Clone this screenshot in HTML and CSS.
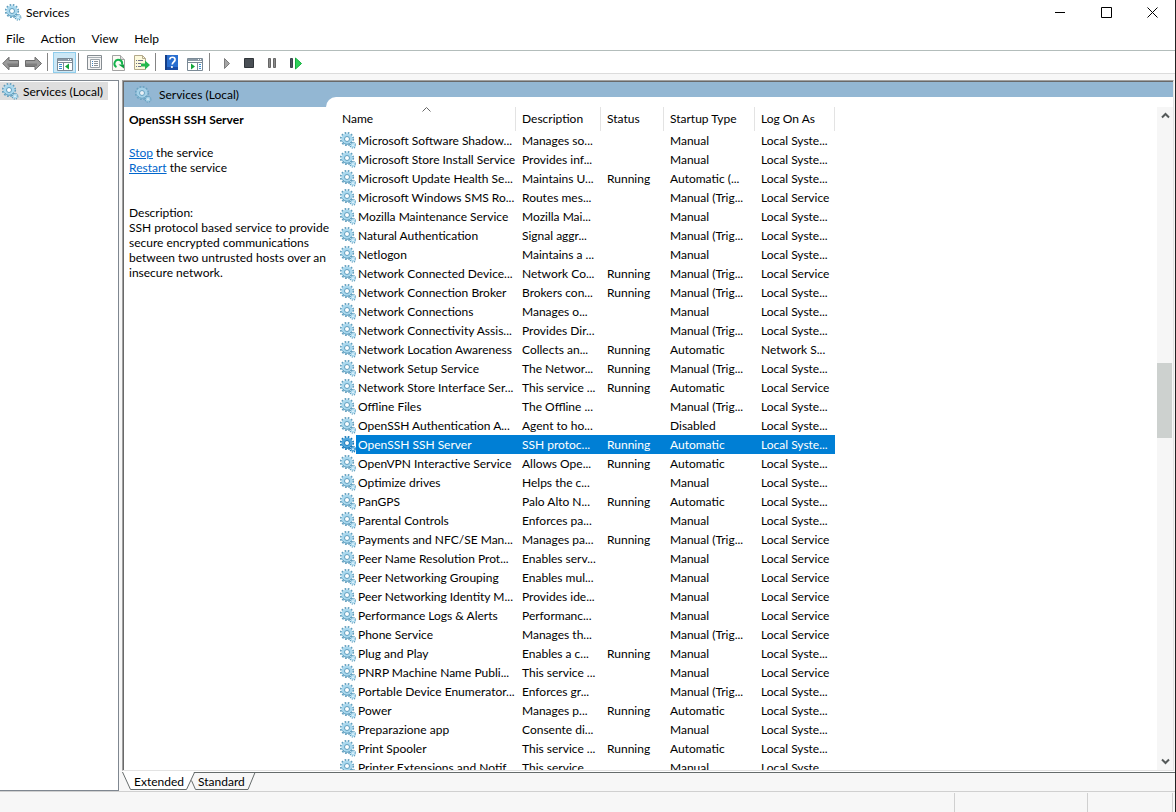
FILE: index.html
```
<!DOCTYPE html>
<html lang="en">
<head>
    <meta charset="UTF-8">
    <meta name="viewport" content="width=device-width, initial-scale=1.0">
    <title>Services</title>
    <link rel="stylesheet" href="styles.css">
</head>
<body>
    <!-- shared gear icon -->
    <svg class="defs" width="0" height="0" aria-hidden="true">
        <symbol id="gear" viewBox="0 0 17 17">
            <circle class="gear-teeth" cx="7" cy="7" r="6.2" fill="none" stroke-width="1.8" stroke-dasharray="1.7 1.55"/>
            <circle class="gear-ring" cx="7" cy="7" r="4" fill="#fff" stroke-width="3"/>
            <path class="gear-teeth" d="M2.500 9.500A5 5 0 0 0 11.500 9.500" fill="none" stroke-width="1"/>
            <circle class="gear-teeth" cx="7" cy="7" r="2.5" fill="none" stroke-width="1"/>
            <circle class="gear-teeth" cx="13" cy="13.2" r="2.8" fill="none" stroke-width="1.4" stroke-dasharray="1.2 1"/>
            <circle class="gear-ring" cx="13" cy="13.2" r="1.6" fill="#e8f5fb" stroke-width="1.4"/>
        </symbol>
    </svg>

    <div class="window">
        <header class="titlebar">
            <svg class="gear"><use href="#gear"/></svg>
            <span class="caption">Services</span>
            <button class="winbtn" aria-label="Minimize"><svg width="11" height="11"><path d="M0 5.5h10" stroke="#000"/></svg></button>
            <button class="winbtn" aria-label="Maximize"><svg width="11" height="11"><path d="M.5.5h10v10H.5z" fill="none" stroke="#000"/></svg></button>
            <button class="winbtn" aria-label="Close"><svg width="11" height="11"><path d="M.5.5l10 10M10.5.5l-10 10" stroke="#000"/></svg></button>
        </header>

        <nav class="menubar">
            <button>File</button>
            <button>Action</button>
            <button>View</button>
            <button>Help</button>
        </nav>

        <div class="toolbar">
            <button aria-label="Back"><svg viewBox="0 0 17 17"><path d="M.7 9.500L7 3.200v3.300h9.500v6H7v3.300z" fill="#9b9b9b" stroke="#6c6c6c"/><path d="M5 9.500h11v2.500H6z" fill="#7d7d7d"/></svg></button>
            <button aria-label="Forward"><svg viewBox="0 0 17 17"><path d="M16.500 9.500L10 3.200v3.300H.5v6H10v3.300z" fill="#9b9b9b" stroke="#6c6c6c"/><path d="M1 9.500h11v2.500H1z" fill="#7d7d7d"/></svg></button>
            <i class="sep"></i>
            <button class="on" aria-label="Show or hide console tree"><svg viewBox="0 0 17 17">
                <path d="M1.500 4.500h15v12h-15z" fill="#fff" stroke="#7b8a96"/><path d="M2 5h14v2H2z" fill="#8a99a5"/><path d="M2 8.500h14M7.500 9v8" stroke="#7b8a96"/>
                <path d="M12 5.500h1M14 5.500h1" stroke="#fff"/><path d="M3 10.500h3M3 12.500h3M3 14.500h3" stroke="#3b8fd0"/><path d="M9 12.500l4-3v6z" fill="#12a53a"/></svg></button>
            <i class="sep"></i>
            <button aria-label="Properties"><svg viewBox="0 0 17 17">
                <path d="M.5 1.500h14v14H.5z" fill="#f4f4f4" stroke="#858c91"/><path d="M1 3.500h13" stroke="#a9b0b5"/><path d="M3.500 5.500h9v8h-9z" fill="#fff" stroke="#9aa2a8"/>
                <path d="M5 7.500h1M5 9.500h1M5 11.500h1" stroke="#3f80b8"/><path d="M7 7.500h4M7 9.500h4M7 11.500h4" stroke="#8b9298"/></svg></button>
            <button aria-label="Refresh"><svg viewBox="0 0 17 17">
                <path d="M2.500 1.500h8l4 4v11h-12z" fill="#fbfbf4" stroke="#a2a2a2"/><path d="M10.500 1.500v4h4" fill="#ddd" stroke="#a2a2a2"/>
                <path d="M6.500 13A3.800 3.800 0 1 1 12 10.500" fill="none" stroke="#13b34b" stroke-width="2"/><path d="M8.500 10.500h5.500v4z" fill="#0c9e3e"/></svg></button>
            <button aria-label="Export list"><svg viewBox="0 0 17 17">
                <path d="M1.500 1.500h8l3 3v11h-11z" fill="#fcf9dc" stroke="#b3a98b"/><path d="M9.500 1.500v3h3" fill="none" stroke="#b3a98b"/>
                <path d="M3 6.500h1M3 9.500h1M3 12.500h1M5 6.500h5M5 9.500h3M5 12.500h3" stroke="#6c6f88"/><path d="M8 9.500h4V6.500l5 4.500-5 4.500v-3H8z" fill="#24b84d"/></svg></button>
            <i class="sep"></i>
            <button aria-label="Help"><svg viewBox="0 0 17 17">
                <path d="M1 1h13v15H1z" fill="#2a6fd0"/><path d="M1 1h2v15H1z" fill="#163f87"/><path d="M3 13h11v3H3z" fill="#1a4da5"/>
                <path d="M5.800 5.500C6 2.500 11.500 2.300 11 6c-.3 1.800-2.500 2-2.800 4.500" fill="none" stroke="#fff" stroke-width="1.700"/><circle cx="7.900" cy="13" r="1.100" fill="#fff"/></svg></button>
            <button aria-label="Show or hide action pane"><svg viewBox="0 0 17 17">
                <path d="M.5 4.500h15v12H.5z" fill="#fff" stroke="#7b8a96"/><path d="M1 5h14v2H1z" fill="#8a99a5"/><path d="M1 8.500h14M10.500 9v8" stroke="#7b8a96"/>
                <path d="M11 5.500h1M13 5.500h1" stroke="#fff"/><path d="M12 10.500h2M12 12.500h2M12 14.500h2" stroke="#3b8fd0"/><path d="M8 12.500l-4-3v6z" fill="#12a53a"/></svg></button>
            <i class="sep"></i>
            <button aria-label="Start"><svg viewBox="0 0 17 17"><path d="M6.500 4.500v10l5-5z" fill="#a5a5a5" stroke="#7d7d7d"/></svg></button>
            <button aria-label="Stop"><svg viewBox="0 0 17 17"><path d="M3.500 4.500h9v9h-9z" fill="#4a4f55" stroke="#30353a" stroke-linejoin="round"/></svg></button>
            <button aria-label="Pause"><svg viewBox="0 0 17 17"><path d="M4.500 4.500h2v9h-2zM9.500 4.500h2v9h-2z" fill="#8b8b8b" stroke="#666"/></svg></button>
            <button aria-label="Restart"><svg viewBox="0 0 17 17"><path d="M3.500 4.500h2v9h-2z" fill="#4c5560" stroke="#3a434c"/><path d="M8.500 4v11l6-5.500z" fill="#2ed15a" stroke="#14ad3e"/></svg></button>
        </div>

        <main class="console">
            <aside class="tree">
                <a class="node" href="#"><svg class="gear"><use href="#gear"/></svg>Services (Local)</a>
            </aside>

            <div class="result">
                <section class="pane">
                    <div class="detail">
                        <div class="band"><svg class="gear"><use href="#gear"/></svg>Services (Local)</div>
                        <div class="info">
                            <h2>OpenSSH SSH Server</h2>
                            <p><a href="#">Stop</a> the service<br><a href="#">Restart</a> the service</p>
                            <p>Description:<br>SSH protocol based service to provide secure encrypted communications between two untrusted hosts over an insecure network.</p>
                        </div>
                    </div>
                    <div class="listwrap">
                        <div class="list">
                            <div class="rows">
                                <table>
                                    <colgroup>
                                        <col class="c-icon"><col class="c-name"><col class="c-desc"><col class="c-status"><col class="c-start"><col class="c-logon">
                                    </colgroup>
                                    <thead>
                                        <tr>
                                            <th colspan="2" class="sorted">Name<svg width="9" height="5"><path d="M.5 4.500l4-4 4 4" fill="none" stroke="#666"/></svg></th>
                                            <th>Description</th>
                                            <th>Status</th>
                                            <th>Startup Type</th>
                                            <th>Log On As</th>
                                        </tr>
                                    </thead>
                                    <tbody id="services"></tbody>
                                </table>
                            </div>
                            <div class="scrollbar">
                                <button aria-label="Scroll up"><svg width="9" height="7"><path d="M1 5.500l3.500-3.500L8 5.500" fill="none" stroke="#555a5a" stroke-width="2"/></svg></button>
                                <div class="track"><div class="thumb"></div></div>
                                <button aria-label="Scroll down"><svg width="9" height="7"><path d="M1 1.500L4.500 5 8 1.500" fill="none" stroke="#555a5a" stroke-width="2"/></svg></button>
                            </div>
                        </div>
                    </div>
                </section>
                <div class="tabs">
                    <svg class="tabshape" width="134" height="19">
                        <path d="M0 0l8 18h56L72 0z" fill="#fff"/>
                        <path d="M.5 0l8 17.500h56L72.500.5H133l-7 17H73.500l-4-9" fill="none" stroke="#666c6c"/>
                    </svg>
                    <button>Extended</button>
                    <button>Standard</button>
                </div>
            </div>
        </main>

        <footer class="statusbar">
            <span class="cell grow"></span>
            <span class="cell mid"></span>
            <span class="cell end"></span>
        </footer>
    </div>

    <script src="services.js"></script>
</body>
</html>
```
FILE: styles.css
```
* {
    box-sizing: border-box;
}

body {
    margin: 0;
    height: 100vh;
    overflow: hidden;
    background: #f7f7f7;
    color: #000;
    font-family: Lato, "Open Sans", sans-serif;
    font-size: 12px;
    line-height: 15px;
}

button {
    margin: 0;
    padding: 0;
    border: 0;
    background: none;
    color: inherit;
    font: inherit;
}

svg {
    display: block;
    flex: none;
}

.defs {
    position: absolute;
}

.gear {
    --teeth: #5f9dbd;
    --ring: #a9d8ee;
    width: 17px;
    height: 17px;
}

.gear-teeth { stroke: var(--teeth); }
.gear-ring { stroke: var(--ring); }

.window {
    display: flex;
    flex-direction: column;
    height: 100%;
    border-right: 1px solid #222;
}

/* title bar */
.titlebar {
    display: flex;
    align-items: center;
    height: 25px;
    padding-left: 5px;
    background: #fff;
}

.caption {
    flex: 1;
    padding-left: 4px;
}

.winbtn {
    display: flex;
    align-items: center;
    justify-content: center;
    width: 46px;
    height: 25px;
}

/* menu */
.menubar {
    display: flex;
    align-items: center;
    gap: 16px;
    height: 26px;
    padding: 2px 0 0 6px;
    background: #fff;
    border-bottom: 1px solid #b3bdbb;
}

/* toolbar */
.toolbar {
    display: flex;
    align-items: center;
    height: 23px;
    margin-left: -1px;
    background: #fff;
    border-bottom: 1px solid #dcdcdc;
}

.toolbar button {
    width: 23px;
    height: 21px;
    padding: 2px 3px;
}

.toolbar svg {
    width: 17px;
    height: 17px;
}

.toolbar .on {
    background: #cce8f6;
    box-shadow: inset 0 0 0 1px #8fcdec;
}

.sep {
    width: 8px;
    height: 18px;
    padding-left: 2px;
}

.sep::before {
    content: '';
    display: block;
    width: 1px;
    height: 100%;
    background: #858585;
}

/* body of the console */
.console {
    display: flex;
    flex: 1;
    gap: 3px;
    min-height: 0;
    padding-top: 6px;
}

.tree {
    width: 119px;
    padding-top: 1px;
    background: #fff;
    border: solid #7f8790;
    border-width: 1px 1px 1px 0;
}

.node {
    display: flex;
    align-items: center;
    gap: 4px;
    width: 108px;
    height: 18px;
    padding-left: 2px;
    background: #dedede;
    color: #000;
    text-decoration: none;
    white-space: nowrap;
}

.result {
    display: flex;
    flex: 1;
    flex-direction: column;
    min-width: 0;
}

.pane {
    display: flex;
    flex: 1;
    min-height: 0;
    margin-right: 1px;
    background: #fff;
    border: 1px solid #a0a0a0;
    border-right-color: #e3e3e3;
    border-bottom-color: #e3e3e3;
    box-shadow: inset 1px 1px #696969;
    padding: 1px 0 0 1px;
}

/* the text may run a little past the column, over the list's margin */
.detail {
    position: relative;
    z-index: 1;
    width: 202px;
}

.band {
    display: flex;
    align-items: center;
    gap: 7px;
    height: 25px;
    padding-left: 11px;
    background: #93b7d3;
}

.band .gear {
    opacity: 0.8;
}

.info {
    width: 208px;
    padding: 5px 0 0 5px;
}

.info h2 {
    margin: 0 0 18px;
    font-size: 12px;
    line-height: 15px;
}

.info p {
    margin: 0 0 30px;
}

.info a {
    color: #0066cc;
}

.listwrap {
    display: flex;
    flex: 1;
    min-width: 0;
    padding-top: 15px;
    background: linear-gradient(#93b7d3 25px, #fff 25px);
}

.list {
    display: flex;
    flex: 1;
    min-width: 0;
    padding: 10px 0 0 10px;
    background: #fff;
    border-top-left-radius: 10px;
}

.rows {
    flex: 1;
    min-width: 0;
    overflow: hidden;
}

table {
    width: 499px;
    border-collapse: separate;
    border-spacing: 0;
    table-layout: fixed;
}

.c-icon { width: 20px; }
.c-name { width: 160px; }
.c-desc { width: 85px; }
.c-status { width: 63px; }
.c-start { width: 91px; }
.c-logon { width: 80px; }

th {
    height: 24px;
    padding: 0 0 2px 6px;
    border-right: 1px solid #e3e3e3;
    font-weight: normal;
    text-align: left;
}

.sorted {
    position: relative;
}

.sorted svg {
    position: absolute;
    top: 0;
    left: 86px;
}

td {
    height: 19px;
    padding: 0 0 0 6px;
    overflow: hidden;
    white-space: nowrap;
}

td:first-child {
    padding: 0 0 0 4px;
}

td:nth-child(2) {
    padding-left: 2px;
}

.selected td + td {
    background: #007fd5;
    color: #fff;
}

.selected .gear {
    --teeth: #1577b8;
    --ring: #4fa6dc;
}

/* scroll bar */
.scrollbar {
    display: flex;
    flex-direction: column;
    width: 16px;
    background: #f6f6f6;
}

.scrollbar button {
    display: flex;
    align-items: center;
    justify-content: center;
    height: 17px;
}

.track {
    position: relative;
    flex: 1;
}

.thumb {
    position: absolute;
    top: 38%;
    left: 0;
    width: 15px;
    height: 12%;
    background: #cdd1cf;
}

/* tabs at the bottom */
.tabs {
    position: relative;
    display: flex;
    gap: 14px;
    height: 20px;
    padding: 2px 0 2px 12px;
    background: linear-gradient(#fff 1px, #666c6c 1px, #666c6c 2px, #f7f7f7 2px);
}

.tabs button {
    position: relative;
}

.tabshape {
    position: absolute;
    top: 1px;
    left: 0;
}

/* status bar */
.statusbar {
    display: flex;
    height: 21px;
    padding: 1px 2px 0 0;
    border-top: 1px solid #d0d0d0;
}

.cell {
    border-right: 1px solid #d0d0d0;
}

.grow { flex: 1; }
.mid { width: 133px; }
.end { width: 85px; }
```
FILE: services.js
```
// name, description, status, startup type, log on as
const services = [
    ['Microsoft Software Shadow...', 'Manages so...', '', 'Manual', 'Local Syste...'],
    ['Microsoft Store Install Service', 'Provides inf...', '', 'Manual', 'Local Syste...'],
    ['Microsoft Update Health Se...', 'Maintains U...', 'Running', 'Automatic (...', 'Local Syste...'],
    ['Microsoft Windows SMS Ro...', 'Routes mes...', '', 'Manual (Trig...', 'Local Service'],
    ['Mozilla Maintenance Service', 'Mozilla Mai...', '', 'Manual', 'Local Syste...'],
    ['Natural Authentication', 'Signal aggr...', '', 'Manual (Trig...', 'Local Syste...'],
    ['Netlogon', 'Maintains a ...', '', 'Manual', 'Local Syste...'],
    ['Network Connected Device...', 'Network Co...', 'Running', 'Manual (Trig...', 'Local Service'],
    ['Network Connection Broker', 'Brokers con...', 'Running', 'Manual (Trig...', 'Local Syste...'],
    ['Network Connections', 'Manages o...', '', 'Manual', 'Local Syste...'],
    ['Network Connectivity Assis...', 'Provides Dir...', '', 'Manual (Trig...', 'Local Syste...'],
    ['Network Location Awareness', 'Collects an...', 'Running', 'Automatic', 'Network S...'],
    ['Network Setup Service', 'The Networ...', 'Running', 'Manual (Trig...', 'Local Syste...'],
    ['Network Store Interface Ser...', 'This service ...', 'Running', 'Automatic', 'Local Service'],
    ['Offline Files', 'The Offline ...', '', 'Manual (Trig...', 'Local Syste...'],
    ['OpenSSH Authentication A...', 'Agent to ho...', '', 'Disabled', 'Local Syste...'],
    ['OpenSSH SSH Server', 'SSH protoc...', 'Running', 'Automatic', 'Local Syste...'],
    ['OpenVPN Interactive Service', 'Allows Ope...', 'Running', 'Automatic', 'Local Syste...'],
    ['Optimize drives', 'Helps the c...', '', 'Manual', 'Local Syste...'],
    ['PanGPS', 'Palo Alto N...', 'Running', 'Automatic', 'Local Syste...'],
    ['Parental Controls', 'Enforces pa...', '', 'Manual', 'Local Syste...'],
    ['Payments and NFC/SE Man...', 'Manages pa...', 'Running', 'Manual (Trig...', 'Local Service'],
    ['Peer Name Resolution Prot...', 'Enables serv...', '', 'Manual', 'Local Service'],
    ['Peer Networking Grouping', 'Enables mul...', '', 'Manual', 'Local Service'],
    ['Peer Networking Identity M...', 'Provides ide...', '', 'Manual', 'Local Service'],
    ['Performance Logs & Alerts', 'Performanc...', '', 'Manual', 'Local Service'],
    ['Phone Service', 'Manages th...', '', 'Manual (Trig...', 'Local Service'],
    ['Plug and Play', 'Enables a c...', 'Running', 'Manual', 'Local Syste...'],
    ['PNRP Machine Name Publi...', 'This service ...', '', 'Manual', 'Local Service'],
    ['Portable Device Enumerator...', 'Enforces gr...', '', 'Manual (Trig...', 'Local Syste...'],
    ['Power', 'Manages p...', 'Running', 'Automatic', 'Local Syste...'],
    ['Preparazione app', 'Consente di...', '', 'Manual', 'Local Syste...'],
    ['Print Spooler', 'This service ...', 'Running', 'Automatic', 'Local Syste...'],
    ['Printer Extensions and Notif...', 'This service ...', '', 'Manual', 'Local Syste...']
];

const body = document.getElementById('services');
for (const service of services) {
    const row = body.insertRow();
    if (service[0] === 'OpenSSH SSH Server') row.className = 'selected';
    row.insertCell().innerHTML = '<svg class="gear"><use href="#gear"/></svg>';
    for (const text of service) {
        row.insertCell().textContent = text;
    }
}
```
